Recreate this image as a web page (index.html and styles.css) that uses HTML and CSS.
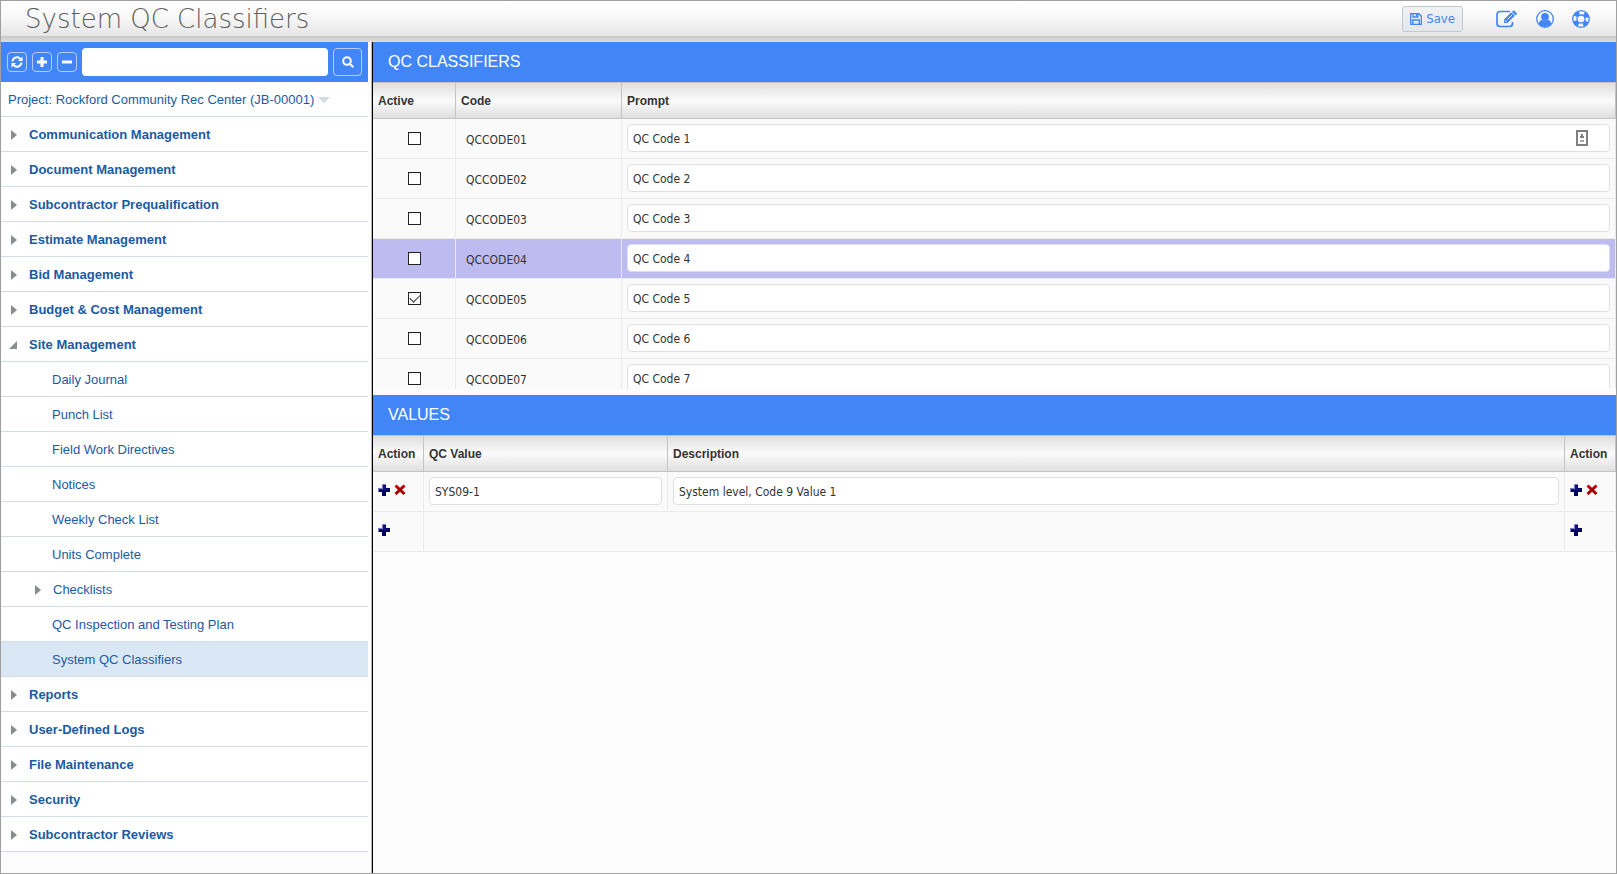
FILE: index.html
```html
<!DOCTYPE html>
<html lang="en">
<head>
<meta charset="utf-8">
<title>System QC Classifiers</title>
<link rel="stylesheet" href="styles.css">
</head>
<body>
<svg class="sprite" aria-hidden="true">
  <symbol id="i-plus" viewBox="0 0 12 12" shape-rendering="crispEdges">
    <path fill="#000066" d="M4 0h4v4h4v4H8v4H4V8H0V4h4z"/>
    <path fill="#7d7dc4" d="M4 0h4v1H5v4H1v3H0V4h4z"/>
    <path fill="#14148a" d="M5 1h2v4h4v1H1V5h4z"/>
  </symbol>
  <symbol id="i-del" viewBox="0 0 12 12">
    <path stroke="#d00000" stroke-width="3" d="M1.500 1.500l9 8.500M10.500 1.500l-9 8.500"/>
    <path stroke="#8a0000" stroke-width="1.500" d="M2.500 3l7.500 7M9.500 3l-7.500 7"/>
  </symbol>
</svg>
<div class="page">
  <header class="topbar">
    <h1 class="title">System QC Classifiers</h1>
    <div class="tools">
      <button class="save" type="button">
        <svg class="save-icon" viewBox="0 0 12 12" fill="none" stroke="currentColor" stroke-width="1.300"><path d="M.7.7h8.300l2.300 2.300v8.300H.7zM3 .7v3.300h5V.7M2.700 11.300V7h6.600v4.300"/><path d="M6.500 1v2.500"/></svg>
        Save
      </button>
      <button class="tool" type="button" aria-label="Edit">
        <svg class="edit-icon" viewBox="0 0 22 18" fill="none" stroke="currentColor"><path stroke-width="1.700" d="M14 1.500H4A3 3 0 0 0 1 4.500v9A3 3 0 0 0 4 16.500h9.500A3 3 0 0 0 16.500 13.500V12"/><path fill="currentColor" stroke="none" d="M8 9.500 16 1.500l3.500 3.500-8 8H8zM16.800.8q.8-.8 1.600 0l2.200 2.100q.8.800 0 1.600l-.7.700-3.700-3.700z"/><path stroke="#f4f4f4" d="M8.800 10.400l1.800 1.800M11.500 9.500l4.500-4.500M15.200 1.800l4 4"/></svg>
      </button>
      <button class="tool" type="button" aria-label="User">
        <svg class="round-icon" viewBox="0 0 18 18"><circle cx="9" cy="9" r="8.300" fill="none" stroke="currentColor" stroke-width="1.300"/><circle cx="9" cy="6.800" r="3.900" fill="currentColor"/><path fill="currentColor" d="M2.800 14c.4-2.400 1.500-4 3.400-4.200q2.800 2 5.600 0c1.900.2 3 1.800 3.400 4.200a8 8 0 0 1-12.400 0z"/></svg>
      </button>
      <button class="tool" type="button" aria-label="Help">
        <svg class="round-icon" viewBox="0 0 18 18" fill="none" stroke="currentColor"><circle cx="9" cy="9" r="8.300" stroke-width="1.300"/><circle cx="9" cy="9" r="4" stroke-width="1.300"/><circle cx="9" cy="9" r="6.200" stroke-width="4.400" stroke-dasharray="4.870 4.870" stroke-dashoffset="-2.430"/></svg>
      </button>
    </div>
  </header>
  <div class="body">
    <nav class="sidebar" aria-label="Modules">
      <div class="searchbar">
        <button class="mini" type="button" aria-label="Refresh"><svg class="mini-icon" viewBox="0 0 12 12" fill="none" stroke="currentColor" stroke-width="2"><path d="M1.500 5.300A4.500 4.500 0 0 1 9.400 3M10.500 6.700A4.500 4.500 0 0 1 2.600 9"/><path fill="currentColor" stroke="none" d="M11.500.5v4.500H7zM.5 11.500V7H5z"/></svg></button>
        <button class="mini" type="button" aria-label="Expand all"><svg class="mini-icon" viewBox="0 0 12 12" stroke="currentColor" stroke-width="3"><path d="M6 1v10M1 6h10"/></svg></button>
        <button class="mini" type="button" aria-label="Collapse all"><svg class="mini-icon" viewBox="0 0 12 12" stroke="currentColor" stroke-width="3"><path d="M1 6h10"/></svg></button>
        <input class="search" type="text" aria-label="Search menu">
        <button class="find" type="button" aria-label="Search"><svg class="mini-icon" viewBox="0 0 12 12" fill="none" stroke="currentColor" stroke-width="2"><circle cx="5" cy="5" r="3.800"/><path d="M7.800 7.800l3.500 3.500"/></svg></button>
      </div>
      <button class="project" type="button">Project: Rockford Community Rec Center (JB-00001)<span class="caret"></span></button>
      <ul class="menu">
        <li><a class="item" href="#"><span class="arrow"></span>Communication Management</a></li>
        <li><a class="item" href="#"><span class="arrow"></span>Document Management</a></li>
        <li><a class="item" href="#"><span class="arrow"></span>Subcontractor Prequalification</a></li>
        <li><a class="item" href="#"><span class="arrow"></span>Estimate Management</a></li>
        <li><a class="item" href="#"><span class="arrow"></span>Bid Management</a></li>
        <li><a class="item" href="#"><span class="arrow"></span>Budget &amp; Cost Management</a></li>
        <li><a class="item" href="#"><span class="arrow open"></span>Site Management</a>
          <ul class="menu">
            <li><a class="item sub" href="#">Daily Journal</a></li>
            <li><a class="item sub" href="#">Punch List</a></li>
            <li><a class="item sub" href="#">Field Work Directives</a></li>
            <li><a class="item sub" href="#">Notices</a></li>
            <li><a class="item sub" href="#">Weekly Check List</a></li>
            <li><a class="item sub" href="#">Units Complete</a></li>
            <li><a class="item sub parent" href="#"><span class="arrow"></span>Checklists</a></li>
            <li><a class="item sub" href="#">QC Inspection and Testing Plan</a></li>
            <li><a class="item sub current" href="#" aria-current="page">System QC Classifiers</a></li>
          </ul>
        </li>
        <li><a class="item" href="#"><span class="arrow"></span>Reports</a></li>
        <li><a class="item" href="#"><span class="arrow"></span>User-Defined Logs</a></li>
        <li><a class="item" href="#"><span class="arrow"></span>File Maintenance</a></li>
        <li><a class="item" href="#"><span class="arrow"></span>Security</a></li>
        <li><a class="item" href="#"><span class="arrow"></span>Subcontractor Reviews</a></li>
      </ul>
    </nav>
    <main class="main">
      <h2 class="band">QC CLASSIFIERS</h2>
      <div class="pane">
        <table class="grid">
          <colgroup><col class="c-active"><col class="c-code"><col></colgroup>
          <thead><tr><th>Active</th><th>Code</th><th>Prompt</th></tr></thead>
          <tbody>
            <tr><td class="tick"><input class="check" type="checkbox" aria-label="QCCODE01 active"></td><td class="code">QCCODE01</td><td><div class="field"><input class="text" type="text" aria-label="QCCODE01 prompt" value="QC Code 1"><svg class="fill-icon" viewBox="0 0 12 16"><path fill="#fff" stroke="#808080" stroke-width="2" d="M1 1h10v14H1z"/><path fill="#808080" d="M5 4h2v2h1v2H4V6h1z"/><path fill="#a8a8a8" d="M4 10h4v2H4z"/></svg></div></td></tr>
            <tr><td class="tick"><input class="check" type="checkbox" aria-label="QCCODE02 active"></td><td class="code">QCCODE02</td><td><input class="text" type="text" aria-label="QCCODE02 prompt" value="QC Code 2"></td></tr>
            <tr><td class="tick"><input class="check" type="checkbox" aria-label="QCCODE03 active"></td><td class="code">QCCODE03</td><td><input class="text" type="text" aria-label="QCCODE03 prompt" value="QC Code 3"></td></tr>
            <tr class="selected"><td class="tick"><input class="check" type="checkbox" aria-label="QCCODE04 active"></td><td class="code">QCCODE04</td><td><input class="text" type="text" aria-label="QCCODE04 prompt" value="QC Code 4"></td></tr>
            <tr><td class="tick"><input class="check" type="checkbox" checked aria-label="QCCODE05 active"></td><td class="code">QCCODE05</td><td><input class="text" type="text" aria-label="QCCODE05 prompt" value="QC Code 5"></td></tr>
            <tr><td class="tick"><input class="check" type="checkbox" aria-label="QCCODE06 active"></td><td class="code">QCCODE06</td><td><input class="text" type="text" aria-label="QCCODE06 prompt" value="QC Code 6"></td></tr>
            <tr><td class="tick"><input class="check" type="checkbox" aria-label="QCCODE07 active"></td><td class="code">QCCODE07</td><td><input class="text" type="text" aria-label="QCCODE07 prompt" value="QC Code 7"></td></tr>
          </tbody>
        </table>
      </div>
      <h2 class="band">VALUES</h2>
      <table class="grid">
        <colgroup><col class="c-action"><col class="c-value"><col><col class="c-end"></colgroup>
        <thead><tr><th>Action</th><th>QC Value</th><th>Description</th><th>Action</th></tr></thead>
        <tbody>
          <tr>
            <td><div class="actions"><button class="act" type="button" aria-label="Add row"><svg class="act-icon"><use href="#i-plus"/></svg></button><button class="act" type="button" aria-label="Delete row"><svg class="act-icon"><use href="#i-del"/></svg></button></div></td>
            <td><input class="text" type="text" aria-label="QC Value" value="SYS09-1"></td>
            <td><input class="text" type="text" aria-label="Description" value="System level, Code 9 Value 1"></td>
            <td><div class="actions"><button class="act" type="button" aria-label="Add row"><svg class="act-icon"><use href="#i-plus"/></svg></button><button class="act" type="button" aria-label="Delete row"><svg class="act-icon"><use href="#i-del"/></svg></button></div></td>
          </tr>
          <tr>
            <td><div class="actions"><button class="act" type="button" aria-label="Add row"><svg class="act-icon"><use href="#i-plus"/></svg></button></div></td>
            <td colspan="2"></td>
            <td><div class="actions"><button class="act" type="button" aria-label="Add row"><svg class="act-icon"><use href="#i-plus"/></svg></button></div></td>
          </tr>
        </tbody>
      </table>
    </main>
  </div>
</div>
</body>
</html>
```
FILE: styles.css
```css
* { box-sizing: border-box; }
body { margin: 0; color: #333; font: 12px/16px "DejaVu Sans Condensed", Tahoma, "DejaVu Sans", sans-serif; }
button { margin: 0; padding: 0; border: 0; background: none; font: inherit; color: inherit; cursor: pointer; }
svg { display: block; }
.sprite { display: none; }
.page { display: flex; flex-direction: column; min-height: 100vh; border: 1px solid #a0a0a0; background: #fcfcfc; }

.topbar { display: flex; align-items: center; justify-content: space-between; height: 41px; padding: 0 26px 6px 24px; background: linear-gradient(#c6c6c6, #dfdfdf) bottom / 100% 6px no-repeat, linear-gradient(#fff, #fafafa 40%, #e6e6e6) top / 100% 35px no-repeat; }
.title { margin: 0; font: 200 26px/34px "DejaVu Sans", sans-serif; color: #606060; }
.tools { display: flex; align-items: center; color: #4285f6; }
.save { display: flex; align-items: center; gap: 4px; height: 26px; margin-right: 33px; padding: 0 7px; border: 1px solid #bccad4; border-radius: 3px; background: linear-gradient(#f0f2f3, #e4e8eb); font-size: 13px; }
.save-icon { width: 12px; height: 12px; }
.tool + .tool { margin-left: 18px; }
.edit-icon { width: 22px; height: 18px; }
.round-icon { width: 18px; height: 18px; }

.body { display: flex; flex: 1; }
.sidebar { flex: none; width: 367px; font: 13px/16px "Liberation Sans", Arial, sans-serif; color: #1a5aa5; }
.searchbar { display: flex; align-items: center; gap: 5px; height: 40px; padding: 0 6px; background: #4285f6; color: #fff; }
.mini { display: grid; place-items: center; width: 20px; height: 20px; border: 1px solid #b4cdf8; border-radius: 4px; }
.mini-icon { width: 12px; height: 12px; }
.search { flex: 1; min-width: 0; height: 28px; padding: 0 6px; border: 0; border-radius: 4px; background: #fff; }
.find { display: grid; place-items: center; width: 29px; height: 28px; border: 1px solid #b4cdf8; border-radius: 4px; }
.project { display: flex; align-items: center; gap: 4px; width: 100%; height: 35px; padding: 2px 0 0 7px; border-bottom: 1px solid #d2dbe6; background: #fff; }
.caret { border: 6px solid transparent; border-top-color: #d2dbe3; border-bottom: 0; }
.menu { margin: 0; padding: 0; list-style: none; }
.item { display: flex; align-items: center; height: 35px; padding: 2px 0 0 8px; border-bottom: 1px solid #d2dbe6; background: #fff; color: inherit; font-weight: bold; text-decoration: none; }
.arrow { width: 20px; }
.arrow::before { content: ""; display: block; width: 6px; height: 10px; margin-left: 2px; background: #8a8d90; clip-path: polygon(0 0, 100% 50%, 0 100%); }
.arrow.open::before { width: 8px; height: 8px; margin-left: 0; clip-path: polygon(100% 0, 100% 100%, 0 100%); }
.sub { padding-left: 51px; font-weight: normal; }
.sub.parent { padding-left: 32px; }
.current { background: #dae8f5; }

.main { flex: 1; min-width: 0; margin-left: 4px; border-left: 1px solid #000; box-shadow: -1px 0 #b8b8b8; }
.band { margin: 0; padding: 0 15px; background: #4285f6; color: #fff; font: 16px/40px "Liberation Sans", Arial, sans-serif; }
.pane { height: 307px; margin-bottom: 6px; overflow: auto; scrollbar-width: none; }
.grid { width: 100%; table-layout: fixed; border-collapse: separate; border-spacing: 0; }
.c-active { width: 83px; }
.c-code { width: 166px; }
.c-action { width: 51px; }
.c-value { width: 244px; }
.c-end { width: 51px; }
.grid th { height: 37px; padding: 0 5px; border: solid #c4c4c4; border-width: 1px 1px 1px 0; background: linear-gradient(#dfdfdf, #fbfbfb 50%, #dfdfdf); font: bold 12px/16px "Liberation Sans", Arial, sans-serif; text-align: left; }
.grid td { height: 40px; padding: 0 5px 1px; border: solid #ebebeb; border-width: 0 1px 1px 0; background: #fafafa; }
.grid .code { padding: 2px 5px 0 10px; }
.grid .tick { padding: 0; }
.grid .selected td { background: #bdbbf0; }
.check { appearance: none; display: block; width: 13px; height: 13px; margin: 0 auto; border: 1px solid #222; background: #fff; }
.check:checked::after { content: ""; display: block; width: 9px; height: 5px; margin: 1px; border: solid #333; border-width: 0 0 1px 1px; transform: rotate(-45deg); }
.text { display: block; width: 100%; height: 28px; padding: 2px 5px 0; border: 1px solid #dde1e6; border-radius: 4px; background: #fff; color: inherit; font: inherit; }
.field { position: relative; }
.fill-icon { position: absolute; top: 6px; right: 22px; width: 12px; height: 16px; }
.actions { display: flex; gap: 4px; padding-bottom: 2px; }
.act-icon { width: 12px; height: 12px; }
```
